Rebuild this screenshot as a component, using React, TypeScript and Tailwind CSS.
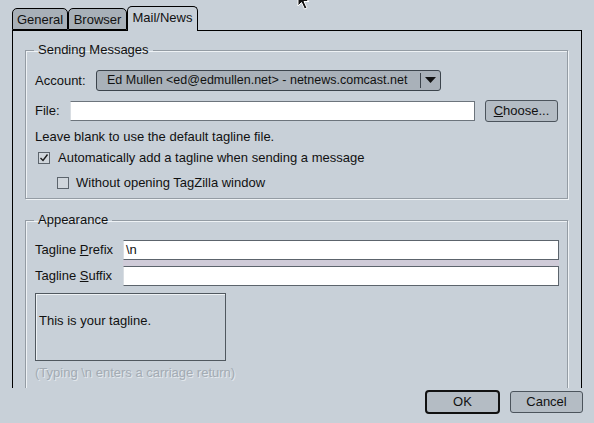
import React from "react";

const font = { fontFamily: '"Liberation Sans", Arial, sans-serif' };

const Tab = ({ label, active }: { label: string; active?: boolean }) => (
  <div
    className={
      active
        ? "relative z-10 -mb-px flex h-[25px] w-[71px] items-center justify-center rounded-t-[5px] border border-b-0 border-black bg-[#c8d0d8] pb-[2px]"
        : "flex h-[22px] items-center justify-center rounded-t-[5px] border border-black bg-[#a8b0b8] pt-[1px]"
    }
  >
    {label}
  </div>
);

const Check = ({ checked }: { checked?: boolean }) => (
  <div className="flex h-[12px] w-[12px] items-center justify-center border border-[#5c646c] bg-[#d0d6dc]">
    {checked && (
      <svg width="10" height="10" viewBox="0 0 10 10">
        <path d="M1.5 5 L4 7.5 L8.5 1.5" fill="none" stroke="#1a1a1a" strokeWidth="1.4" />
      </svg>
    )}
  </div>
);

const Group = ({ title, children, className }: { title: string; children: React.ReactNode; className?: string }) => (
  <fieldset
    className={
      "ml-[12px] w-[543px] border border-[#949ca4] shadow-[inset_1px_1px_0_#eef2f5,1px_1px_0_#eef2f5] " +
      (className ?? "")
    }
  >
    <legend className="ml-[8px] px-[4px] leading-[16px]">{title}</legend>
    <div className="pl-[9px] pr-[7px]">{children}</div>
  </fieldset>
);

export default function App() {
  return (
    <div
      className="relative h-[423px] w-[594px] overflow-hidden bg-[#c8d0d8] text-[13px] text-[#111]"
      style={font}
    >
      {/* mouse pointer */}
      <svg className="absolute left-[296px] top-[-9px]" width="18" height="22" viewBox="0 0 18 22">
        <path d="M2 1 L2 15 L5.5 11.5 L8.5 18 L11 17 L8 10.5 L13 10.5 Z" fill="#111" stroke="#fff" strokeWidth="1" />
      </svg>

      <div className="flex items-end pl-[12px] pt-[6px]">
        <div className="w-[56px]">
          <Tab label="General" />
        </div>
        <div className="w-[59px]">
          <Tab label="Browser" />
        </div>
        <Tab label="Mail/News" active />
      </div>

      <div className="ml-[12px] h-[358px] w-[570px] overflow-hidden border-x border-t border-black">
        <div className="pt-[11px]">
          <Group title="Sending Messages" className="pb-[7px]">
            <div className="mt-[12px] flex h-[21px] items-center">
              <span className="w-[61px]">Account:</span>
              <div className="flex h-[21px] w-[345px] items-center rounded-[3px] border border-[#3c444c] bg-[#a9b1b9]">
                <span className="flex-1 whitespace-nowrap pl-[10px] text-[12.5px] leading-none">
                  Ed Mullen &lt;ed@edmullen.net&gt; - netnews.comcast.net
                </span>
                <div className="h-[15px] w-px bg-[#3c444c]" />
                <div className="flex w-[19px] justify-center">
                  <svg width="11" height="7" viewBox="0 0 11 7">
                    <path d="M0 0 H11 L5.5 6 Z" fill="#111" />
                  </svg>
                </div>
              </div>
            </div>
            <div className="mt-[9px] flex h-[22px] items-center">
              <span className="w-[35px]">File:</span>
              <div className="h-[20px] w-[405px] border border-[#6c747c] border-l-[#d8dde2] bg-white" />
              <button className="ml-[10px] h-[22px] w-[73px] rounded-[3px] border border-[#4c545c] bg-[#b4bcc4]">
                <span className="underline">C</span>hoose...
              </button>
            </div>
            <div className="mt-[7px] leading-[16px]">Leave blank to use the default tagline file.</div>
            <div className="mt-[5px] flex items-center gap-[8px] pl-[3px] leading-[16px]">
              <Check checked />
              <span>Automatically add a tagline when sending a message</span>
            </div>
            <div className="mt-[9px] flex items-center gap-[7px] pl-[22px] leading-[16px]">
              <Check />
              <span>Without opening TagZilla window</span>
            </div>
          </Group>

          <Group title="Appearance" className="mt-[13px] pb-[20px]">
            <div className="mt-[12px] flex items-center">
              <span className="w-[88px]">
                Tagline <span className="underline">P</span>refix
              </span>
              <div className="flex h-[20px] w-[436px] items-center border border-[#5c646c] border-l-[#d8dde2] bg-white pl-[2px]">
                \n
              </div>
            </div>
            <div className="ml-[88px] h-[6px] w-[436px] bg-[#cfcbd8]" />
            <div className="flex items-center">
              <span className="w-[88px]">
                Tagline <span className="underline">S</span>uffix
              </span>
              <div className="h-[20px] w-[436px] border border-[#5c646c] border-l-[#d8dde2] bg-white" />
            </div>
            <div className="mt-[7px] h-[68px] w-[191px] border border-[#50585f] pl-[3px] pt-[19px] leading-[16px] shadow-[inset_1px_1px_0_#eef2f5]">
              This is your tagline.
            </div>
            <div className="mt-[4px] leading-[16px] text-[#a3abb3] [text-shadow:1px_1px_0_#e4e9ee]">
              (Typing \n enters a carriage return)
            </div>
          </Group>
        </div>
      </div>

      <div className="mt-[2px] flex items-center justify-end gap-[10px] pr-[11px]">
        <button className="h-[24px] w-[75px] rounded-[4px] border-2 border-[#111] bg-[#b4bcc4]">OK</button>
        <button className="h-[22px] w-[73px] rounded-[3px] border border-[#4c545c] bg-[#b4bcc4]">Cancel</button>
      </div>
    </div>
  );
}
